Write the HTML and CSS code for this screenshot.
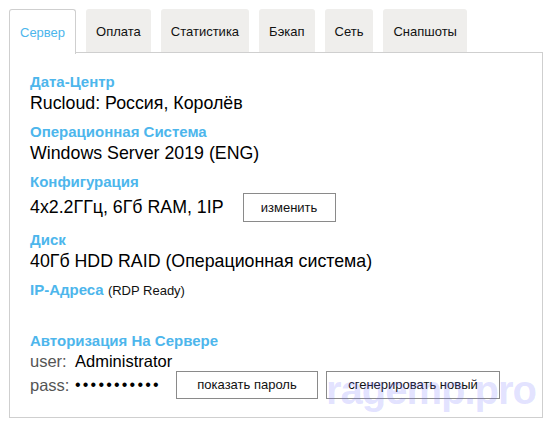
FILE: index.html
```html
<!DOCTYPE html>
<html lang="ru">
<head>
<meta charset="utf-8">
<link rel="stylesheet" href="styles.css">
</head>
<body>
<div class="wrap">
  <div class="tabs">
    <div class="tab active">Сервер</div>
    <div class="tab">Оплата</div>
    <div class="tab">Статистика</div>
    <div class="tab">Бэкап</div>
    <div class="tab">Сеть</div>
    <div class="tab">Снапшоты</div>
  </div>
  <div class="panel">
    <div class="block">
      <div class="head">Дата-Центр</div>
      <div class="val">Rucloud: Россия, Королёв</div>
    </div>
    <div class="block">
      <div class="head">Операционная Система</div>
      <div class="val">Windows Server 2019 (ENG)</div>
    </div>
    <div class="block">
      <div class="head">Конфигурация</div>
      <div class="val row"><span>4x2.2ГГц, 6Гб RAM, 1IP</span><button class="btn btn-change">изменить</button></div>
    </div>
    <div class="block">
      <div class="head">Диск</div>
      <div class="val">40Гб HDD RAID (Операционная система)</div>
    </div>
    <div class="block">
      <div class="head">IP-Адреса <span class="note">(RDP Ready)</span></div>
      <div class="val empty"></div>
    </div>
    <div class="auth">
      <div class="head">Авторизация На Сервере</div>
      <div class="cred"><span class="lbl">user:</span><span class="cv">Administrator</span></div>
      <div class="cred pass"><span class="lbl">pass:</span><span class="dots">•••••••••••</span><button class="btn btn-show">показать пароль</button><button class="btn btn-gen">сгенерировать новый</button></div>
    </div>
    <div class="watermark" aria-hidden="true">ragemp.pro</div>
  </div>
</div>
</body>
</html>
```
FILE: styles.css
```css
html, body {
  margin: 0;
  padding: 0;
  background: #fff;
}
body {
  font-family: "Liberation Sans", Arial, sans-serif;
  color: #111;
}
.wrap {
  padding: 9px 4px 0 9px;
}
.tabs {
  display: flex;
  gap: 10px;
  height: 44px;
}
.tab {
  box-sizing: border-box;
  height: 44px;
  padding: 0 10px;
  display: flex;
  align-items: center;
  padding-top: 1px;
  font-size: 13px;
  color: #111;
  background: #efeeec;
  border-radius: 3px 3px 0 0;
}
.tab.active {
  background: #fff;
  color: #4db6ec;
  border: 1px solid #cfcfcf;
  border-bottom: none;
  height: 45px;
  position: relative;
  z-index: 1;
}
.panel {
  position: relative;
  box-sizing: border-box;
  width: 534px;
  height: 366px;
  margin-top: -1px;
  border: 1px solid #cfcfcf;
  padding: 19px 20px 0 20px;
}
.head {
  font-size: 15px;
  font-weight: bold;
  color: #4db6ec;
  line-height: 20px;
}
.note {
  font-size: 13px;
  font-weight: normal;
  color: #111;
}
.val {
  font-size: 17.8px;
  line-height: 22px;
  color: #000;
}
.val.empty {
  height: 22px;
}
.block {
  margin-bottom: 8px;
}
.row {
  display: flex;
  align-items: center;
  height: 30px;
}
.btn {
  box-sizing: border-box;
  font-family: "Liberation Sans", Arial, sans-serif;
  font-size: 13px;
  color: #111;
  background: #fff;
  border: 1px solid #8a8a8a;
  border-radius: 0;
  height: 29px;
  padding: 0 14px;
  margin: 0;
}
.btn-change {
  margin-left: 19px;
  width: 93px;
}
.cred {
  display: flex;
  align-items: center;
  font-size: 16.5px;
  line-height: 20px;
}
.lbl {
  color: #555;
  width: 45px;
}
.cv {
  color: #000;
}
.pass {
  height: 29px;
  margin-top: -1px;
}
.dots {
  font-size: 16px;
  letter-spacing: 2.2px;
  color: #000;
  width: 101px;
  line-height: 20px;
}
.btn-show {
  width: 142px;
  height: 28px;
}
.btn-gen {
  width: 174px;
  height: 28px;
  margin-left: 8px;
}
.watermark {
  position: absolute;
  right: 6px;
  bottom: 4px;
  font-size: 40px;
  font-weight: bold;
  color: rgba(110, 110, 255, 0.2);
  letter-spacing: -1px;
  pointer-events: none;
}
```
